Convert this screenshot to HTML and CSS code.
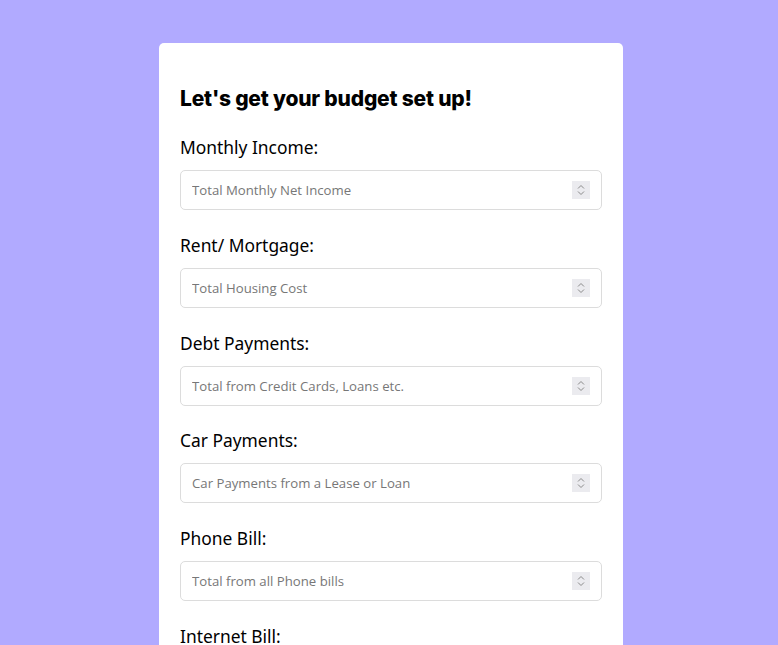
FILE: index.html
```html
<!DOCTYPE html>
<html>
<head>
<meta charset="utf-8">
<link rel="stylesheet" href="styles.css">
</head>
<body>
<main class="card">
  <h1 class="title">Let's get your budget set up!</h1>
  <form class="form">
    <div class="field">
      <label class="label">Monthly Income:</label>
      <div class="input-wrap"><input class="input" type="number" placeholder="Total Monthly Net Income"><span class="spin"><svg viewBox="0 0 18 18" width="18" height="18"><path d="M6 7.5 9 4.5 12 7.5M6 10.5 9 13.5 12 10.5" fill="none" stroke="#8a8a8a" stroke-width="1"/></svg></span></div>
    </div>
    <div class="field">
      <label class="label">Rent/ Mortgage:</label>
      <div class="input-wrap"><input class="input" type="number" placeholder="Total Housing Cost"><span class="spin"><svg viewBox="0 0 18 18" width="18" height="18"><path d="M6 7.5 9 4.5 12 7.5M6 10.5 9 13.5 12 10.5" fill="none" stroke="#8a8a8a" stroke-width="1"/></svg></span></div>
    </div>
    <div class="field">
      <label class="label">Debt Payments:</label>
      <div class="input-wrap"><input class="input" type="number" placeholder="Total from Credit Cards, Loans etc."><span class="spin"><svg viewBox="0 0 18 18" width="18" height="18"><path d="M6 7.5 9 4.5 12 7.5M6 10.5 9 13.5 12 10.5" fill="none" stroke="#8a8a8a" stroke-width="1"/></svg></span></div>
    </div>
    <div class="field">
      <label class="label">Car Payments:</label>
      <div class="input-wrap"><input class="input" type="number" placeholder="Car Payments from a Lease or Loan"><span class="spin"><svg viewBox="0 0 18 18" width="18" height="18"><path d="M6 7.5 9 4.5 12 7.5M6 10.5 9 13.5 12 10.5" fill="none" stroke="#8a8a8a" stroke-width="1"/></svg></span></div>
    </div>
    <div class="field">
      <label class="label">Phone Bill:</label>
      <div class="input-wrap"><input class="input" type="number" placeholder="Total from all Phone bills"><span class="spin"><svg viewBox="0 0 18 18" width="18" height="18"><path d="M6 7.5 9 4.5 12 7.5M6 10.5 9 13.5 12 10.5" fill="none" stroke="#8a8a8a" stroke-width="1"/></svg></span></div>
    </div>
    <div class="field">
      <label class="label">Internet Bill:</label>
      <div class="input-wrap"><input class="input" type="number" placeholder="Total Internet Cost"><span class="spin"><svg viewBox="0 0 18 18" width="18" height="18"><path d="M6 7.5 9 4.5 12 7.5M6 10.5 9 13.5 12 10.5" fill="none" stroke="#8a8a8a" stroke-width="1"/></svg></span></div>
    </div>
  </form>
</main>
</body>
</html>
```
FILE: styles.css
```css
html, body {
  margin: 0;
  padding: 0;
}
body {
  background: #b1aaff;
  min-height: 645px;
  overflow: hidden;
  font-family: "Open Sans", "Noto Sans", sans-serif;
}
.card {
  width: 422px;
  margin: 43px 0 0 159px;
  background: #ffffff;
  border-radius: 5px;
  padding: 41px 21px 40px 21px;
}
.title {
  margin: 0 0 20px 0;
  font-family: "Inter", "Noto Sans", sans-serif;
  font-weight: 800;
  font-size: 21px;
  line-height: 30px;
  letter-spacing: -0.2px;
  color: #000;
}
.form {
  display: flex;
  flex-direction: column;
  gap: 21.75px;
}
.field {
  display: flex;
  flex-direction: column;
  gap: 10px;
}
.label {
  font-family: "Noto Sans", "Open Sans", sans-serif;
  font-size: 17.4px;
  line-height: 26px;
  color: #000;
}
.input-wrap {
  position: relative;
}
.input {
  box-sizing: border-box;
  width: 100%;
  height: 40px;
  border: 1px solid #dcdcdc;
  border-radius: 5px;
  padding: 0 40px 0 11px;
  font-family: "Open Sans", "Noto Sans", sans-serif;
  font-size: 13.2px;
  color: #333;
  background: #fff;
  outline: none;
  -moz-appearance: textfield;
}
.input::placeholder {
  color: #777;
}
.input::-webkit-inner-spin-button,
.input::-webkit-outer-spin-button {
  -webkit-appearance: none;
  margin: 0;
}
.spin {
  position: absolute;
  right: 12px;
  top: 11px;
  width: 18px;
  height: 18px;
  background: #ebebef;
  display: flex;
}
```
